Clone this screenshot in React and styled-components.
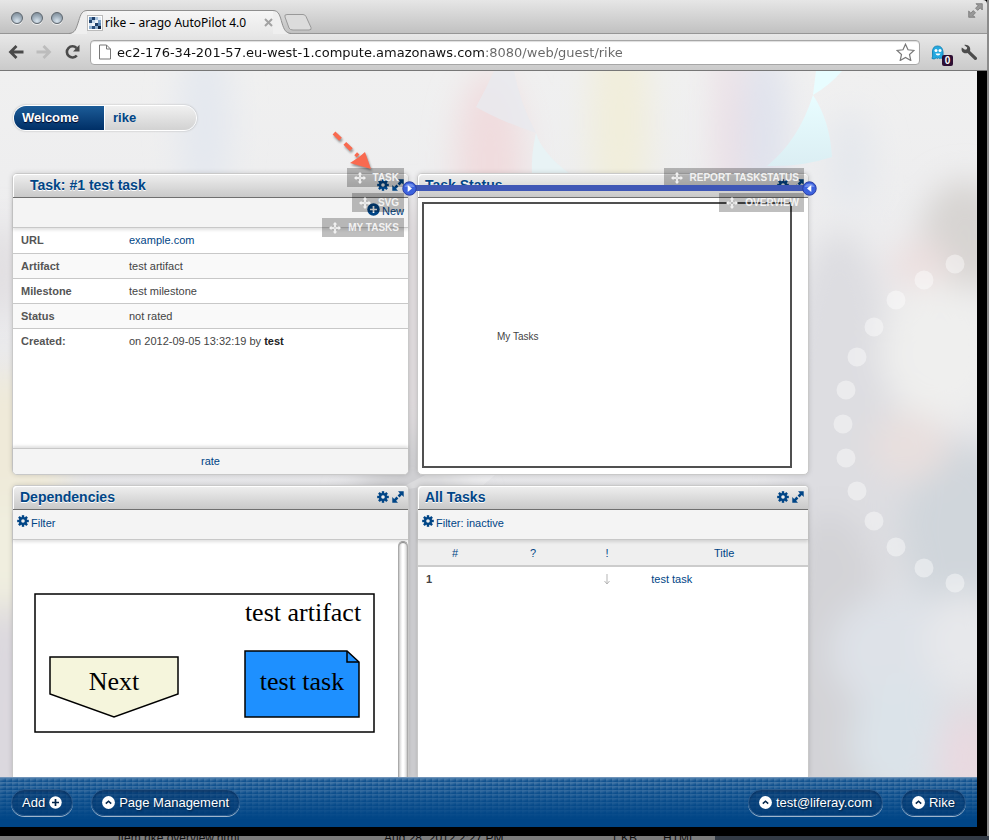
import React from "react";
import styled, { createGlobalStyle, css } from "styled-components";

const sans = '"Liberation Sans", Arial, sans-serif';
const chromeFont = '"DejaVu Sans", sans-serif';
const navy = "#004586";

const GlobalStyle = createGlobalStyle`
  *, *::before, *::after { box-sizing: border-box; }
  html, body, #root { margin: 0; height: 100%; }
  body { font-family: ${sans}; font-size: 11px; color: #444; background: #3a424c; overflow: hidden; }
  button, input { font: inherit; color: inherit; }
  button { padding: 0; border: 0; background: none; cursor: pointer; }
  svg { display: block; flex: none; }
  a { color: ${navy}; text-decoration: none; }
`;

/* ---------- window frame ---------- */

const Screen = styled.div`
  height: 100vh;
  display: flex;
  flex-direction: column;
`;

const Desktop = styled.div`
  flex: 1;
  min-height: 0;
  display: flex;
  padding-right: 2px;
  background: #8b8b8b;
`;

const Window = styled.div`
  flex: 1;
  min-width: 0;
  display: flex;
  flex-direction: column;
  background: #000;
`;

const TitleBar = styled.header`
  height: 34px;
  display: flex;
  align-items: flex-end;
  background: linear-gradient(#e6e6e6, #c0c0c0);
  border-top-right-radius: 4px;
  box-shadow: inset 0 -1px #969696;
`;

const WindowButtons = styled.div`
  align-self: center;
  display: flex;
  gap: 8px;
  padding: 2px 0 0 11px;
`;

const WindowButton = styled.button`
  width: 12px;
  height: 12px;
  border-radius: 50%;
  border: 1px solid #5d666e;
  background: radial-gradient(circle at 50% 80%, #d8e4ee, #97a6b3 60%, #75818c);
  box-shadow: 0 1px #f0f0f0;
`;

const Tab = styled.div`
  display: flex;
  height: 24px;
  margin-left: 6px;
  width: 222px;
`;

const TabBody = styled.div`
  flex: 1;
  min-width: 0;
  display: flex;
  align-items: center;
  gap: 2px;
  border-top: 1px solid #8f8f8f;
  background: linear-gradient(#f6f6f6, #e8e8e8);
  font-family: "Noto Sans", sans-serif;
  font-size: 12px;
  color: #000;
`;

const TabTitle = styled.span`
  flex: 1;
  white-space: nowrap;
`;

const NewTab = styled.button`
  align-self: center;
  margin: 10px 0 0 -7px;
`;

const Fullscreen = styled.button`
  margin: 0 4px 16px auto;
`;

const ToolBar = styled.nav`
  height: 37px;
  display: flex;
  align-items: center;
  padding: 0 9px 0 8px;
  background: linear-gradient(#e8e8e8, #cacaca);
  border-bottom: 1px solid #777;
`;

const NavButtons = styled.div`
  display: flex;
  gap: 12px;
  margin-right: 9px;
`;

const AddressBar = styled.label`
  flex: 1;
  height: 25px;
  display: flex;
  align-items: center;
  gap: 6px;
  padding: 0 4px 0 8px;
  background: #fff;
  border: 1px solid #a6a6a6;
  border-radius: 4px;
  box-shadow: inset 0 1px 1px #ddd;
`;

/* The host is drawn darker than the port and path that follow it. */
const Address = styled.input`
  flex: 1;
  min-width: 0;
  border: 0;
  outline: 0;
  padding: 0;
  background: linear-gradient(to right, #111 367px, #666 367px);
  background-clip: text;
  -webkit-text-fill-color: transparent;
  font-family: ${chromeFont};
  font-size: 13px;
`;

const Extension = styled.button`
  position: relative;
  margin: 0 16px 0 11px;
`;

const Badge = styled.span`
  position: absolute;
  left: 11px;
  top: 10px;
  width: 11px;
  height: 11px;
  border-radius: 2px;
  background: #2d0f33;
  color: #fff;
  font: bold 10px/11px ${sans};
  text-align: center;
`;

/* ---------- page ---------- */

const Page = styled.main`
  position: relative;
  flex: 1;
  min-height: 0;
  margin-right: 10px;
  padding: 34px 168px 0 12px;
  display: flex;
  flex-direction: column;
  overflow: hidden;
  background: #efefef;
`;

const Backdrop = styled.svg`
  position: absolute;
  inset: 0;
  width: 100%;
  height: 100%;
`;

const PageTabs = styled.nav`
  position: relative;
  align-self: flex-start;
  display: flex;
  height: 26px;
  margin: 0 0 42px 1px;
  border: 1px solid #fff;
  border-radius: 13px;
  overflow: hidden;
  box-shadow: 0 0 2px #aaa;
`;

const PageTab = styled.a`
  width: 91px;
  padding-left: 8px;
  font-size: 13px;
  line-height: 24px;
  font-weight: bold;
  background: linear-gradient(#f0f0f0, #d2d2d2);
  ${(p) =>
    p.$active &&
    css`
      color: #fff;
      background: linear-gradient(#1c5c98, #002f66);
      border-right: 1px solid #fff;
      text-shadow: 0 1px 1px #002;
    `}
`;

const Board = styled.div`
  position: relative;
  flex: 1;
  min-height: 0;
  display: grid;
  grid-template-columns: 397fr 392fr;
  grid-template-rows: 302px minmax(0, 1fr);
  gap: 10px 8px;
`;

const Portlet = styled.section`
  position: relative;
  min-width: 0;
  min-height: 0;
  display: flex;
  flex-direction: column;
  background: #fff;
  border: 1px solid #c9c9c9;
  border-bottom-width: ${(p) => (p.$open ? 0 : "1px")};
  border-radius: ${(p) => (p.$open ? "5px 5px 0 0" : "5px")};
  box-shadow: 0 0 5px rgba(0, 0, 0, 0.15);
`;

const PortletHeader = styled.header`
  flex: none;
  height: 24px;
  display: flex;
  align-items: center;
  gap: 3px;
  padding: 0 4px 2px ${(p) => (p.$indent ? "17px" : "7px")};
  border-bottom: 1px solid #707070;
  border-radius: 4px 4px 0 0;
  background: linear-gradient(#efefef, #c9c9c9);
  box-shadow: inset 1px 1px #fff;
`;

const PortletTitle = styled.h2`
  flex: 1;
  margin: 0;
  font-size: 14px;
  line-height: 20px;
  color: ${navy};
  text-shadow: 0 1px #fff;
`;

const ActionStrip = styled.div`
  flex: none;
  position: relative;
  height: 30px;
  display: flex;
  align-items: flex-start;
  justify-content: ${(p) => (p.$end ? "flex-end" : "flex-start")};
  padding: 5px 4px;
  background: #f4f4f4;
  border-bottom: 1px solid #c8c8c8;
  box-shadow: 0 2px 3px rgba(0, 0, 0, 0.12);
`;

const ActionLink = styled.a`
  display: flex;
  gap: 2px;
  line-height: 17px;
`;

const Details = styled.table`
  width: 100%;
  border-collapse: collapse;
  text-align: left;
  line-height: 14px;

  tr { height: 25px; border-bottom: 1px solid #c8c8c8; }
  tr:nth-child(even) { background: #f9f9f9; }
  tr:last-child { border-bottom: 0; }
  th { width: 108px; padding: 0 8px; color: #555; }
  td { padding: 0 8px; }
  b { color: #222; }
`;

const PortletFooter = styled.footer`
  margin-top: auto;
  height: 26px;
  text-align: center;
  line-height: 25px;
  background: #f4f4f4;
  border-top: 1px solid #c8c8c8;
  border-radius: 0 0 4px 4px;
  box-shadow: 0 -2px 3px rgba(0, 0, 0, 0.12);
`;

const StatusFrame = styled.div`
  flex: 1;
  margin: 4px 16px 6px 4px;
  padding: 127px 0 0 73px;
  border: 2px solid #505050;
  font-size: 10px;
  line-height: 12px;
`;

const GraphPane = styled.div`
  flex: 1;
  min-height: 0;
  display: flex;
  justify-content: space-between;
  overflow: hidden;
`;

const Graph = styled.svg`
  margin: 53px 0 0 21px;
  font-family: "Liberation Serif", serif;
  font-size: 26px;
`;

const ScrollTrack = styled.div`
  width: 10px;
  margin-top: 1px;
  border: 1px solid #aaa;
  border-bottom: 0;
  border-radius: 5px 5px 0 0;
  background: linear-gradient(to right, #cfcfcf, #fff 40%, #fff 60%, #d5d5d5);
  box-shadow: inset 0 1px 1px #888;
`;

const Tasks = styled.table`
  width: 100%;
  table-layout: fixed;
  border-collapse: collapse;
  line-height: 14px;

  th { height: 26px; padding: 0; font-weight: normal; color: ${navy}; background: #efefef; border-bottom: 2px solid #ccc; }
  td { height: 25px; padding: 0; }
  td:first-child { padding-left: 8px; font-weight: bold; }
  td:last-child { padding-left: 11px; }
`;

const Col = styled.col`
  width: ${(p) => p.$share};
`;

const PriorityCell = styled.td`
  svg { margin: 0 auto; }
`;

/* ---------- layout-editing overlays ---------- */

const HandleStack = styled.div`
  position: absolute;
  z-index: 1;
  top: -6px;
  right: 4px;
  display: flex;
  flex-direction: column;
  align-items: flex-end;
  gap: 6px;
`;

const DragHandle = styled.button`
  height: 19px;
  display: flex;
  align-items: center;
  gap: 7px;
  padding: 0 5px 0 7px;
  background: rgba(0, 0, 0, 0.25);
  color: rgba(255, 255, 255, 0.85);
  font-size: 10px;
  font-weight: bold;
  white-space: nowrap;
`;

const DropLine = styled.div`
  position: absolute;
  z-index: 2;
  top: 11px;
  left: -9px;
  right: -2px;
  height: 6px;
  display: flex;
  align-items: center;
  justify-content: space-between;
  background: #3f57b6;

  svg { margin: 0 -7px; }
`;

const Pointer = styled.svg`
  position: absolute;
  z-index: 3;
  top: -47px;
  right: 33px;
`;

/* ---------- dock ---------- */

const Dock = styled.footer`
  flex: none;
  height: 50px;
  margin: 0 10px 9px 0;
  padding: 0 11px;
  display: flex;
  align-items: center;
  gap: 18px;
  border-top: 1px solid #6f93b8;
  background:
    linear-gradient(rgba(0, 69, 134, 0.1), #004586 85%),
    linear-gradient(160deg, rgba(255, 255, 255, 0.26) 30%, rgba(255, 255, 255, 0) 75%) 0 0 / 6px 4px,
    #155591;
`;

const DockButton = styled.button`
  height: 27px;
  display: flex;
  align-items: center;
  gap: 4px;
  padding: 0 10px;
  border: 1px solid #2a5b8e;
  border-radius: 14px;
  background: rgba(0, 45, 95, 0.4);
  box-shadow: 0 1px #9fb6cd, inset 0 2px 2px rgba(0, 30, 70, 0.4);
  color: #fff;
  font-size: 13px;
  text-shadow: 1px 1px 2px #001c3a;
`;

const Spacer = styled.div`
  flex: 1;
`;

const FileRow = styled.div`
  flex: none;
  height: 4px;
  overflow: hidden;
  display: grid;
  grid-template-columns: 266px 227px 52px 1fr 300px;
  padding-left: 118px;
  background: linear-gradient(to right, #7c7c7c 715px, #333b46 715px);
  color: #111;
  font: 12px/4px ${sans};
  white-space: nowrap;
`;

/* ---------- icons ---------- */

const Gear = ({ size = 12 }) => (
  <svg width={size} height={size} viewBox="-6 -6 12 12" fill={navy} aria-hidden="true">
    {[0, 45, 90, 135].map((a) => (
      <rect key={a} x="-1.2" y="-5.8" width="2.4" height="11.6" transform={`rotate(${a})`} />
    ))}
    <circle r="3" fill="none" stroke={navy} strokeWidth="2.2" />
    <circle r="1.8" fill="#eee" />
  </svg>
);

const Expand = () => (
  <svg width="12" height="12" viewBox="0 0 12 12" fill={navy} aria-hidden="true">
    <path d="M6 .3h5.700V6L9.800 4.100 7.500 6.400 5.600 4.500 7.900 2.200zM6 11.700H.3V6l1.900 1.900 2.300-2.300 1.900 1.900-2.300 2.300z" />
  </svg>
);

const Move = () => (
  <svg width="12" height="12" viewBox="0 0 12 12" aria-hidden="true">
    <path d="M5.5 2v3.5H2M6.5 2v3.5H10M5.5 10V6.5H2M6.5 10V6.5H10" fill="none" stroke="#f2f2f2" strokeWidth=".9" />
    <path d="M6 0l2.3 2.5H3.7zM6 12l2.3-2.5H3.7zM0 6l2.5-2.3v4.6zM12 6L9.5 3.7v4.6z" fill="#f2f2f2" />
  </svg>
);

const PlusDisc = ({ disc, plus }) => (
  <svg width="13" height="13" viewBox="0 0 13 13" aria-hidden="true">
    <circle cx="6.5" cy="6.5" r="6.2" fill={disc} />
    <path d="M6.5 3v7M3 6.5h7" stroke={plus} strokeWidth="1.7" />
  </svg>
);

const UpDisc = () => (
  <svg width="13" height="13" viewBox="0 0 13 13" aria-hidden="true">
    <circle cx="6.5" cy="6.5" r="6.4" fill="#fff" />
    <path d="M3.8 7.6l2.7-2.4 2.7 2.4" fill="none" stroke="#04264a" strokeWidth="1.6" />
  </svg>
);

const LineEnd = ({ left }) => (
  <svg width="15" height="15" viewBox="0 0 15 15" aria-hidden="true">
    <circle cx="7.5" cy="7.5" r="6.7" fill="#3c62de" stroke="#2a3da2" />
    <path d="M2.5 6a5.2 4.6 0 0110 0z" fill="#86a0f0" opacity=".7" />
    <path d={left ? "M9.3 4v7L5 7.5z" : "M5.7 4v7L10 7.5z"} fill="#fff" />
  </svg>
);

const Controls = () => (
  <>
    <button aria-label="Options"><Gear /></button>
    <button aria-label="Maximize"><Expand /></button>
  </>
);

const favicon = [
  "0,0,#6f95bd", "1,0,#1d3f6b", "2,0,#a9c3dd", "3,0,#e3edf7",
  "0,1,#23466f", "1,1,#c2d5e8", "2,1,#eef4fa", "3,1,#7ea2c8",
  "0,2,#dbe7f3", "1,2,#f2f6fb", "2,2,#1f3f68", "3,2,#5c86b3",
  "0,3,#8fb0d1", "1,3,#2b4f7c", "2,3,#90aecb", "3,3,#0d2443",
].map((s) => s.split(","));

const dots = [
  [955, 193], [924, 209], [896, 229], [874, 256], [857, 286], [846, 319], [843, 353],
  [846, 387], [857, 420], [874, 450], [896, 476], [924, 497], [955, 512],
];

const blobs = [
  [205, 50, 26, 90, "#e4e8ef"], [490, 90, 34, 90, "#f0dcde"], [620, 50, 30, 120, "#f1eedb"],
  [728, 60, 10, 120, "#ead9e2"], [765, 70, 22, 100, "#dfe2ed"], [850, 90, 24, 50, "#e5e8ed"],
  [2, 200, 14, 50, "#dcd8db"], [5, 410, 60, 110, "#efead9"], [5, 500, 60, 70, "#f0eedf"],
  [5, 640, 40, 110, "#dbd8de"], [412, 250, 60, 120, "#e0dcde"], [412, 590, 80, 230, "#cfcfd2"],
  [840, 390, 60, 230, "#dddde1"], [830, 620, 60, 180, "#d3d3d7"],
  [965, 165, 44, 56, "#d7d4d2"], [920, 195, 30, 26, "#ecdfdf"], [940, 280, 60, 70, "#efefee"],
  [960, 460, 60, 90, "#d0d6db"], [910, 375, 40, 34, "#e8dfde"], [900, 580, 70, 60, "#dee2e8"],
  [965, 570, 40, 50, "#e7e8eb"], [900, 670, 50, 60, "#dbe3e9"], [965, 690, 28, 50, "#e9d9e0"],
];

const PageBackdrop = () => (
  <Backdrop viewBox="0 0 977 706" preserveAspectRatio="xMaxYMin slice" aria-hidden="true">
    <defs>
      <filter id="soft" x="-20%" y="-20%" width="140%" height="140%">
        <feGaussianBlur stdDeviation="16" />
      </filter>
      <linearGradient id="base" x1="0" y1="0" x2="0" y2="1">
        <stop offset="0" stopColor="#f0f0f0" />
        <stop offset=".3" stopColor="#ececee" />
        <stop offset="1" stopColor="#dcdce0" />
      </linearGradient>
      <linearGradient id="sail" x1="0" y1="0" x2="0" y2="1">
        <stop offset="0" stopColor="#e8fdff" />
        <stop offset="1" stopColor="#dbeef3" />
      </linearGradient>
    </defs>
    <rect width="977" height="706" fill="url(#base)" />
    <g filter="url(#soft)">
      {blobs.map(([x, y, rx, ry, c]) => (
        <ellipse key={`${x}-${y}`} cx={x} cy={y} rx={rx} ry={ry} fill={c} />
      ))}
    </g>
    <path d="M494 0h20q6 32 22 62Q500 50 476 36 486 18 494 0z" fill="#e8eaef" opacity=".8" />
    <path d="M536 62q6 20 34 41h-38q-1-20 4-41z" fill="#e8f3f5" />
    <path d="M816 0h26q-12 14-29 24z" fill="#e8fdff" />
    <path d="M813 24q17 26 19 62-30 10-65 9 32-26 46-71z" fill="url(#sail)" />
    {dots.map(([x, y]) => (
      <circle key={y} cx={x} cy={y} r="9.5" fill="#fff" opacity=".42" />
    ))}
    <path d="M395 420l30-16h70l-14 12h-60z" fill="#fff" opacity=".25" />
  </Backdrop>
);

const details = [
  ["URL", <a href="#url">example.com</a>],
  ["Artifact", "test artifact"],
  ["Milestone", "test milestone"],
  ["Status", "not rated"],
  ["Created:", <>on 2012-09-05 13:32:19 by <b>test</b></>],
];

const Handle = ({ children }) => (
  <DragHandle><Move />{children}</DragHandle>
);

function BrowserChrome() {
  return (
    <>
      <TitleBar>
        <WindowButtons>
          <WindowButton aria-label="Close" />
          <WindowButton aria-label="Minimize" />
          <WindowButton aria-label="Zoom" />
        </WindowButtons>
        <Tab>
          <svg width="18" height="24" viewBox="0 0 18 24">
            <path d="M0 24C6 23 7 19 9 13S12 .5 18 .5V24z" fill="#efefef" />
            <path d="M0 23.5C6 23 7 19 9 13S12 .5 18 .5" fill="none" stroke="#8f8f8f" />
          </svg>
          <TabBody>
            <svg width="16" height="16" viewBox="0 0 16 16">
              <rect x=".5" y=".5" width="15" height="15" fill="#fff" stroke="#bbb" />
              {favicon.map(([x, y, c]) => (
                <rect key={x + y} x={2 + x * 3} y={2 + y * 3} width="3" height="3" fill={c} />
              ))}
            </svg>
            <TabTitle>rike – arago AutoPilot 4.0</TabTitle>
            <button aria-label="Close tab">
              <svg width="9" height="9" viewBox="0 0 9 9">
                <path d="M1 1l7 7M8 1L1 8" stroke="#a2a2a2" strokeWidth="2" />
              </svg>
            </button>
          </TabBody>
          <svg width="18" height="24" viewBox="0 0 18 24">
            <path d="M0 .5C6 .5 7 6 9 13s4 10 9 11H0z" fill="#efefef" />
            <path d="M0 .5C6 .5 7 6 9 13s4 10 9 10.500" fill="none" stroke="#8f8f8f" />
          </svg>
        </Tab>
        <NewTab aria-label="New tab">
          <svg width="28" height="17" viewBox="0 0 28 17">
            <path d="M3 .5h16q2 0 3 2l5 11q1 2.500-2 2.500H9q-3 0-4-2L1 3Q0 .5 3 .5z" fill="#dcdcdc" stroke="#999" />
          </svg>
        </NewTab>
        <Fullscreen aria-label="Full screen">
          <svg width="15" height="15" viewBox="0 0 15 15" fill="#999" stroke="#6f6f6f" strokeWidth=".7">
            <path d="M8 .7h6.300V7l-2.100-2.100-2.500 2.500-2.200-2.200 2.500-2.500zM7 14.300H.7V8l2.100 2.100 2.500-2.500 2.200 2.200-2.500 2.500z" />
          </svg>
        </Fullscreen>
      </TitleBar>
      <ToolBar>
        <NavButtons>
          <button aria-label="Back">
            <svg width="16" height="14" viewBox="0 0 16 14" fill="none" stroke="#4a4a4a" strokeWidth="2.800">
              <path d="M15.500 7H3M8.500 1L2.500 7l6 6" />
            </svg>
          </button>
          <button aria-label="Forward">
            <svg width="16" height="14" viewBox="0 0 16 14" fill="none" stroke="#bcbcbc" strokeWidth="2.800">
              <path d="M.5 7H13M7.500 1l6 6-6 6" />
            </svg>
          </button>
          <button aria-label="Reload">
            <svg width="17" height="16" viewBox="0 0 17 16">
              <path d="M12.800 11.500a5.600 5.600 0 11-.3-7.500" fill="none" stroke="#4a4a4a" strokeWidth="2.600" />
              <path d="M15.500.8v6.700H9z" fill="#4a4a4a" />
            </svg>
          </button>
        </NavButtons>
        <AddressBar>
          <svg width="12" height="16" viewBox="0 0 12 16" fill="#fff" stroke="#777">
            <path d="M.5 1h7l4 4v10H.5zM7.500 1v4h4" />
          </svg>
          <Address
            aria-label="Address"
            defaultValue="ec2-176-34-201-57.eu-west-1.compute.amazonaws.com:8080/web/guest/rike"
          />
          <button aria-label="Bookmark this page">
            <svg width="19" height="18" viewBox="0 0 19 18">
              <path d="M9.500 1.200l2.500 5.600 6 .6-4.500 4.100 1.300 6-5.300-3.100-5.300 3.100 1.300-6L1 7.400l6-.6z" fill="#fff" stroke="#777" strokeWidth="1.200" />
            </svg>
          </button>
        </AddressBar>
        <Extension aria-label="Blocked trackers">
          <svg width="14" height="15" viewBox="0 0 14 15">
            <path d="M1.500 7Q1.500 1 6.500 1T12 7v6q-1 1-2-.2-1.200 1.500-2.400 0-1.200 1.500-2.400 0-2 2-4.200.7Q2 12 1.500 7z" fill="#25a9e0" stroke="#1687ba" />
            <circle cx="5" cy="5.500" r="1.500" fill="#fff" />
            <circle cx="9" cy="5.500" r="1.500" fill="#fff" />
            <path d="M4.500 8.500h5q-.5 2-2.500 2t-2.500-2z" fill="#fff" />
          </svg>
          <Badge>0</Badge>
        </Extension>
        <button aria-label="Settings">
          <svg width="17" height="17" viewBox="0 0 17 17" fill="#4c4c4c">
            <path d="M3.200.9l3 2.700-.4 1.700-1.800.5L.8 3.400C.1 6 .8 7.800 2.500 8.700c1.400.7 2.800.6 4 .2l7 6.800c1.700 1 3.200-.8 2.300-2.200L9 7c.5-1.500.3-3.100-.7-4.400C7.100 1 5.200.3 3.200.9z" />
          </svg>
        </button>
      </ToolBar>
    </>
  );
}

function TaskPortlet() {
  return (
    <Portlet>
      <PortletHeader $indent>
        <PortletTitle>Task: #1 test task</PortletTitle>
        <Controls />
      </PortletHeader>
      <ActionStrip $end>
        <ActionLink href="#new"><PlusDisc disc={navy} plus="#fff" />New</ActionLink>
      </ActionStrip>
      <Details>
        <tbody>
          {details.map(([name, value]) => (
            <tr key={name}>
              <th scope="row">{name}</th>
              <td>{value}</td>
            </tr>
          ))}
        </tbody>
      </Details>
      <PortletFooter><a href="#rate">rate</a></PortletFooter>
      <HandleStack>
        <Handle>TASK</Handle>
        <Handle>SVG</Handle>
        <Handle>MY TASKS</Handle>
      </HandleStack>
      <Pointer width="50" height="46" viewBox="0 0 50 46" aria-hidden="true">
        <g fill="#f96a50" filter="drop-shadow(1px 2px 1px rgba(0,0,0,.4))">
          <path d="M9 6L33 29" stroke="#f96a50" strokeWidth="4" strokeDasharray="9 6" />
          <path d="M46 42L40 25l-6 5-9 6z" />
        </g>
      </Pointer>
    </Portlet>
  );
}

function StatusPortlet() {
  return (
    <Portlet>
      <PortletHeader>
        <PortletTitle>Task Status</PortletTitle>
        <Controls />
      </PortletHeader>
      <StatusFrame>My Tasks</StatusFrame>
      <HandleStack>
        <Handle>REPORT TASKSTATUS</Handle>
        <Handle>OVERVIEW</Handle>
      </HandleStack>
      <DropLine><LineEnd /><LineEnd left /></DropLine>
    </Portlet>
  );
}

function DependenciesPortlet() {
  return (
    <Portlet $open>
      <PortletHeader>
        <PortletTitle>Dependencies</PortletTitle>
        <Controls />
      </PortletHeader>
      <ActionStrip>
        <ActionLink href="#filter"><Gear />Filter</ActionLink>
      </ActionStrip>
      <GraphPane>
        <Graph width="342" height="141" viewBox="0 0 342 141" stroke="#000" strokeWidth="1.500">
          <rect x="1" y="1" width="339" height="138" fill="#fff" />
          <path d="M16 64h128v37L80 124 16 101z" fill="#f5f5dc" />
          <path d="M211 58h102l12 11v55H211z" fill="#1e90ff" />
          <path d="M313 58v11h12" fill="none" />
          <g fill="#000" stroke="none" textAnchor="middle">
            <text x="269" y="28">test artifact</text>
            <text x="80" y="97">Next</text>
            <text x="268" y="97">test task</text>
          </g>
        </Graph>
        <ScrollTrack />
      </GraphPane>
    </Portlet>
  );
}

function AllTasksPortlet() {
  return (
    <Portlet $open>
      <PortletHeader>
        <PortletTitle>All Tasks</PortletTitle>
        <Controls />
      </PortletHeader>
      <ActionStrip>
        <ActionLink href="#filter"><Gear />Filter: inactive</ActionLink>
      </ActionStrip>
      <Tasks>
        <colgroup>
          <Col $share="19%" />
          <Col $share="21%" />
          <Col $share="17%" />
          <Col $share="43%" />
        </colgroup>
        <thead>
          <tr>
            <th scope="col">#</th>
            <th scope="col">?</th>
            <th scope="col">!</th>
            <th scope="col">Title</th>
          </tr>
        </thead>
        <tbody>
          <tr>
            <td>1</td>
            <td />
            <PriorityCell>
              <svg width="6" height="11" viewBox="0 0 6 11" role="img" aria-label="Low priority">
                <path d="M3 0v10M.5 7L3 10l2.500-3" fill="none" stroke="#b5b5b5" />
              </svg>
            </PriorityCell>
            <td><a href="#task">test task</a></td>
          </tr>
        </tbody>
      </Tasks>
    </Portlet>
  );
}

export default function App() {
  return (
    <Screen>
      <GlobalStyle />
      <Desktop>
        <Window>
          <BrowserChrome />
          <Page>
            <PageBackdrop />
            <PageTabs>
              <PageTab href="#welcome" $active>Welcome</PageTab>
              <PageTab href="#rike">rike</PageTab>
            </PageTabs>
            <Board>
              <TaskPortlet />
              <StatusPortlet />
              <DependenciesPortlet />
              <AllTasksPortlet />
            </Board>
          </Page>
          <Dock>
            <DockButton>Add<PlusDisc disc="#fff" plus="#04264a" /></DockButton>
            <DockButton><UpDisc />Page Management</DockButton>
            <Spacer />
            <DockButton><UpDisc />test@liferay.com</DockButton>
            <DockButton><UpDisc />Rike</DockButton>
          </Dock>
        </Window>
      </Desktop>
      <FileRow>
        <span>item rike overview.html</span>
        <span>Aug 28, 2012 2:27 PM</span>
        <span>1 KB</span>
        <span>HTML</span>
      </FileRow>
    </Screen>
  );
}
